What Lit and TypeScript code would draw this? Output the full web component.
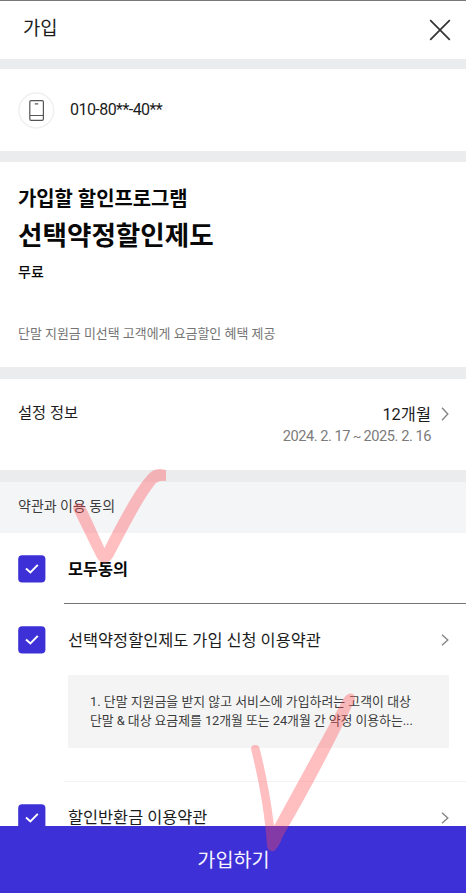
import { LitElement, html, css, svg } from "lit";
import { customElement, property } from "lit/decorators.js";

@customElement("agree-check")
export class AgreeCheck extends LitElement {
  static styles = css`
    :host { display: block; width: 28px; height: 28px; }
    svg { display: block; }
  `;
  render() {
    return html`<svg width="28" height="28" viewBox="0 0 28 28">
      <rect x="0.2" y="0.2" width="27.2" height="27.2" rx="4" fill="#3d30d6" />
      <path d="M8 13.4 L12.4 17.4 L19.8 9.9" fill="none" stroke="#fff" stroke-width="2" />
    </svg>`;
  }
}

@customElement("chevron-icon")
export class ChevronIcon extends LitElement {
  @property({ type: Number }) size = 12;
  static styles = css`
    :host { display: block; }
    svg { display: block; }
  `;
  render() {
    const h = this.size;
    return html`<svg width="8" height=${h} viewBox="0 0 8 ${h}">
      ${svg`<path d=${`M1 0.7 L6.8 ${h / 2} L1 ${h - 0.7}`} fill="none" stroke="#858585" stroke-width="1.4" />`}
    </svg>`;
  }
}

@customElement("app-root")
export class AppRoot extends LitElement {
  static styles = css`
    :host {
      display: block;
      position: relative;
      width: 466px;
      height: 893px;
      overflow: hidden;
      background: #fff;
      color: #1c1c1c;
      font-family: Roboto, "Noto Sans CJK KR", sans-serif;
      white-space: nowrap;
    }
    .page { display: flex; flex-direction: column; height: 893px; }
    .page > * { flex: none; box-sizing: border-box; }
    .header {
      height: 59px;
      border-top: 1px solid #7b7779;
      display: flex;
      justify-content: space-between;
      padding: 16px 15px 0 23px;
    }
    .header-title { font-size: 18.8px; line-height: 24px; }
    .close { display: block; margin-top: 2px; }
    .band { background: #ebecee; height: 12px; }
    .band.first { height: 10px; }
    .band.second { height: 11px; }
    .phone { height: 82px; display: flex; align-items: center; padding-left: 18px; gap: 15px; }
    .phone-number { font-size: 16px; line-height: 20px; letter-spacing: -0.55px; }
    .program { height: 205px; padding: 25px 18px 0; color: #080808; }
    .program-label { font-size: 19.9px; line-height: 26px; font-weight: 700; }
    .program-name { font-size: 26.6px; line-height: 36px; font-weight: 700; margin-top: 5px; }
    .price { font-size: 14px; line-height: 20px; font-weight: 500; margin-top: 8px; }
    .desc { font-size: 12.95px; line-height: 18px; color: #747474; margin-top: 43px; }
    .setting { height: 91px; display: flex; padding: 23px 17px 0 18px; }
    .setting-label { font-size: 15.3px; line-height: 22px; flex: 1; }
    .setting-value { text-align: right; }
    .months { font-size: 16.4px; line-height: 24px; margin-top: 1px; }
    .period { font-size: 14.6px; line-height: 20px; color: #7b7b7b; letter-spacing: -0.45px; margin-top: -1px; }
    .tilde { font-size: 12.6px; }
    .setting chevron-icon { margin: 5px 0 0 10px; }
    .terms-head { height: 51px; background: #f4f5f7; padding: 13px 18px 0; font-size: 14px; line-height: 22px; color: #3c3c3c; }
    .terms { height: 293px; overflow: hidden; }
    .row { display: flex; padding: 0 17px 0 18px; align-items: center; height: 28px; }
    .row-text { flex: 1; margin: 2px 0 0 22px; font-size: 16.35px; line-height: 24px; }
    .row-text.last { line-height: 16px; margin-top: 0; }
    .all { padding-top: 22px; }
    .all .row-text { font-size: 16.3px; font-weight: 700; color: #080808; }
    .rule { height: 1px; margin: 20px 0 22px 64px; background: #747474; }
    .box { margin: 21px 17px 0 68px; height: 73px; background: #f4f4f4; box-sizing: border-box; padding: 17px 0 0 22px; font-size: 12.9px; line-height: 19px; color: #3c3c3c; }
    .box-second { letter-spacing: -0.06px; }
    .thin { height: 1px; margin: 33px 0 22px 64px; background: #f3f3f3; }
    .submit { height: 67px; background: #3d30d6; color: #f6f4ff; font-size: 19.7px; line-height: 67px; text-align: center; border: 0; padding: 1px 0 0 1px; font-family: inherit; }
    .ink { position: absolute; left: 0; top: 0; pointer-events: none; }
  `;

  render() {
    return html`
      <div class="page">
        <header class="header">
          <div class="header-title">가입</div>
          <svg class="close" width="22" height="22" viewBox="0 0 22 22">
            <path d="M1.2 1.2 L20.8 20.8 M20.8 1.2 L1.2 20.8" stroke="#333" stroke-width="1.7" fill="none" />
          </svg>
        </header>
        <div class="band first"></div>
        <section class="phone">
          <svg width="37" height="37" viewBox="0 0 37 37" fill="none">
            <circle cx="18.3" cy="18.5" r="17.4" stroke="#f0f0f0" stroke-width="1.5" />
            <rect x="11.8" y="8.6" width="13.6" height="19.8" rx="1.3" stroke="#555" stroke-width="1.2" />
            <path d="M12 23.5 H25.2 M16.8 11.8 H20.2" stroke="#555" stroke-width="1.2" />
          </svg>
          <div class="phone-number">010-80**-40**</div>
        </section>
        <div class="band second"></div>
        <section class="program">
          <div class="program-label">가입할 할인프로그램</div>
          <div class="program-name">선택약정할인제도</div>
          <div class="price">무료</div>
          <div class="desc">단말 지원금 미선택 고객에게 요금할인 혜택 제공</div>
        </section>
        <div class="band"></div>
        <section class="setting">
          <div class="setting-label">설정 정보</div>
          <div class="setting-value">
            <div class="months">12개월</div>
            <div class="period">2024. 2. 17<span class="tilde"> ~ </span>2025. 2. 16</div>
          </div>
          <chevron-icon .size=${14}></chevron-icon>
        </section>
        <div class="band"></div>
        <div class="terms-head">약관과 이용 동의</div>
        <section class="terms">
          <div class="row all"><agree-check></agree-check><div class="row-text">모두동의</div></div>
          <div class="rule"></div>
          <div class="row">
            <agree-check></agree-check>
            <div class="row-text">선택약정할인제도 가입 신청 이용약관</div>
            <chevron-icon></chevron-icon>
          </div>
          <div class="box">
            <div>1. 단말 지원금을 받지 않고 서비스에 가입하려는 고객이 대상</div>
            <div class="box-second">단말 &amp; 대상 요금제를 12개월 또는 24개월 간 약정 이용하는...</div>
          </div>
          <div class="thin"></div>
          <div class="row">
            <agree-check></agree-check>
            <div class="row-text last">할인반환금 이용약관</div>
            <chevron-icon></chevron-icon>
          </div>
        </section>
        <button class="submit">가입하기</button>
      </div>
      <svg class="ink" width="466" height="893" viewBox="0 0 466 893" fill="#ff4a50" fill-opacity="0.36">
        <path d="M73 509 Q73 503 79 503 Q84 504 87 510 L104.500 548 C119 519 134 491 147 476 Q153 468 161 469 L166 470 L166 481 Q159 480 155 484 C141 502 127 531 113 557 Q109 563 104 563 Q99 562 96 556 Z" />
        <path d="M251 749 Q251 745 255 745 Q259.500 745 260 750 C266 774 271 800 274 826 L344 698 Q348 692 353 694 Q357 698 353 704 C332 748 306 797 283 836 Q279 847 274 851 Q268 852 267 846 C265 812 258 777 251 749 Z" />
      </svg>
    `;
  }
}
